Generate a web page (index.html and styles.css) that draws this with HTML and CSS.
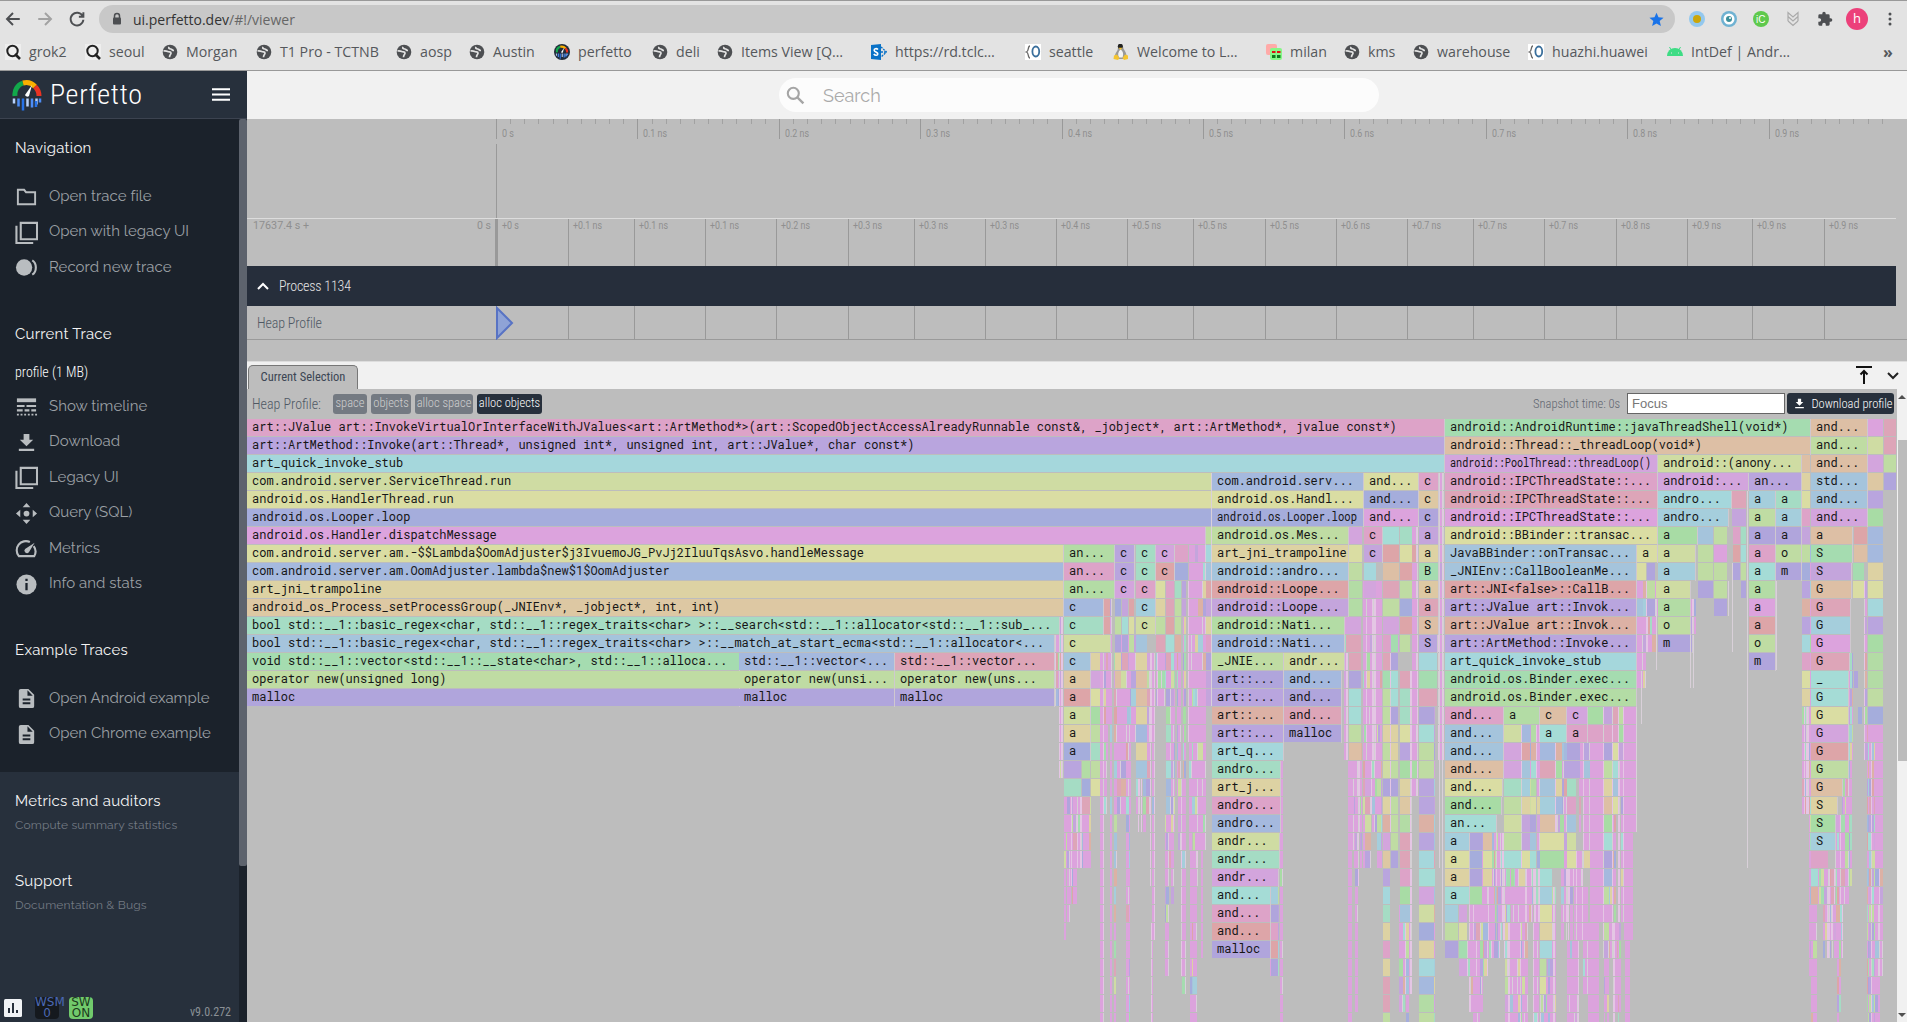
FILE: index.html
```html
<!DOCTYPE html>
<html lang="en">
<head>
<meta charset="utf-8">
<title>Perfetto UI</title>
<link rel="stylesheet" href="styles.css">
</head>
<body>
<svg class="defs" aria-hidden="true">
  <symbol id="globe" viewBox="0 0 16 16"><circle cx="8" cy="8" r="7.300" fill="#4d4f52"/><path d="M1.500 7c3-.5 4 .5 5 .8s2.500-.3 2.500 1.200-1.500 1.500-1.500 4.200M7 2.800c-.8 1.500.2 2 1.700 2.200s1.500 1.600 3.300 1.500" fill="none" stroke="#e3e3e3" stroke-width="1.700"/></symbol>
  <symbol id="grok" viewBox="0 0 16 16"><rect width="16" height="16" fill="#eee"/><circle cx="7.500" cy="7" r="5.200" fill="none" stroke="#222" stroke-width="2"/><path d="M10 10l5 5" stroke="#222" stroke-width="2.600"/></symbol>
  <symbol id="opengrok" viewBox="0 0 16 16"><rect width="16" height="16" fill="#fff"/><path d="M5 2C2.500 2 4.200 7 1.500 8c2.700 1 1 6 3.500 6" fill="none" stroke="#666" stroke-width="1.300"/><ellipse cx="10.800" cy="7.500" rx="3.400" ry="5" fill="none" stroke="#3a6f9c" stroke-width="1.800"/></symbol>
  <symbol id="logo" viewBox="0 0 30 32"><path d="M3 17a12 12 0 0 1 8-13" fill="none" stroke="#12a84b" stroke-width="5"/><path d="M11 4a12 12 0 0 1 12 3.500" fill="none" stroke="#fbb000" stroke-width="5"/><path d="M23 7.500A13 13 0 0 1 27 17" fill="none" stroke="#ea3323" stroke-width="5"/><path d="M20 6l-3 11a2.500 2.500 0 0 1-4-1z" fill="#fff"/><g stroke-width="2.500"><path d="M2 19.500v5M24.500 19.500v6" stroke="#b9d2fb"/><path d="M6.500 19.500v8M20 19.500v9M28 19.500v4" stroke="#4e8df5"/><path d="M11 19.500v12M24 22v6" stroke="#2672e8"/><path d="M15.500 19.500v8" stroke="#b9d2fb"/></g></symbol>
  <symbol id="layers" viewBox="0 0 24 24"><path d="M6 2h17v17H6zM1.500 5v18H19" fill="none" stroke="currentColor" stroke-width="2.200"/></symbol>
  <symbol id="file" viewBox="0 0 24 24"><path fill="currentColor" d="M14 2H6a2 2 0 0 0-2 2v16a2 2 0 0 0 2 2h12a2 2 0 0 0 2-2V8zm2 16H8v-2h8zm0-4H8v-2h8zm-3-5V3.500L18.500 9z"/></symbol>
  <symbol id="download" viewBox="0 0 24 24"><path fill="currentColor" d="M19 9h-4V3H9v6H5l7 7zM4 18.500v2.300h16v-2.300z"/></symbol>
</svg>

<header class="browser">
  <div class="toolbar">
    <svg class="nav-arrow" viewBox="0 0 24 24"><path d="M21 12H4M12 4l-8 8 8 8" /></svg>
    <svg class="nav-arrow off" viewBox="0 0 24 24"><path d="M3 12h17M12 4l8 8-8 8" /></svg>
    <svg class="nav-arrow" viewBox="0 0 24 24"><path d="M19.500 8A8.500 8.500 0 1 0 20.500 13M20.500 3v6h-6" /></svg>
    <div class="address">
      <svg class="lock" viewBox="0 0 10 14"><path d="M2.500 6V4a2.500 2.500 0 0 1 5 0v2" fill="none" stroke="#4d4f52" stroke-width="1.500"/><rect x="1" y="5.500" width="8" height="7" rx="1" fill="#4d4f52"/></svg>
      <span class="url">ui.perfetto.dev<i>/#!/viewer</i></span>
      <svg class="star" viewBox="0 0 24 24"><path fill="#1a73e8" d="M12 1l3.200 7.500 8.100.7-6.200 5.300 1.900 8L12 18.200 5 22.500l1.900-8L.7 9.200l8.100-.7z"/></svg>
    </div>
    <div class="extensions">
      <svg viewBox="0 0 16 16"><circle cx="8" cy="8" r="8" fill="#93c8ee"/><circle cx="8" cy="8" r="4" fill="#cba60a"/></svg>
      <svg viewBox="0 0 16 16"><circle cx="8" cy="8" r="8" fill="#6fb2d2"/><circle cx="8" cy="8" r="5.500" fill="#fff"/><circle cx="8" cy="8" r="3" fill="#3c8f9b"/><circle cx="9" cy="7" r="1" fill="#fff"/></svg>
      <svg viewBox="0 0 16 16"><circle cx="8" cy="8" r="8" fill="#5fc94d"/><text x="3" y="12" class="ext-ic">iC</text></svg>
      <svg viewBox="0 0 16 16"><path d="M3 10V1.500L8 6l5-4.500V10M3 5.500L8 10l5-4.500M3 10l5 4.500L13 10" fill="none" stroke="#aaa" stroke-width="1.200"/></svg>
      <svg viewBox="0 0 24 24"><path fill="#4d4f52" d="M20.500 11H19V7a2 2 0 0 0-2-2h-4V3.500a2.500 2.500 0 0 0-5 0V5H4a2 2 0 0 0-2 2v3.800h1.500a2.700 2.700 0 0 1 0 5.400H2V20a2 2 0 0 0 2 2h3.800v-1.500a2.700 2.700 0 0 1 5.400 0V22H17a2 2 0 0 0 2-2v-4h1.500a2.500 2.500 0 0 0 0-5z"/></svg>
    </div>
    <span class="avatar">h</span>
    <svg class="kebab" viewBox="0 0 4 16"><circle cx="2" cy="3" r="1.500"/><circle cx="2" cy="8" r="1.500"/><circle cx="2" cy="13" r="1.500"/></svg>
  </div>
  <nav class="bookmarks">
    <a><svg><use href="#grok"/></svg><span>grok2</span></a>
    <a><svg><use href="#grok"/></svg><span>seoul</span></a>
    <a><svg><use href="#globe"/></svg><span>Morgan</span></a>
    <a><svg><use href="#globe"/></svg><span>T1 Pro - TCTNB</span></a>
    <a><svg><use href="#globe"/></svg><span>aosp</span></a>
    <a><svg><use href="#globe"/></svg><span>Austin</span></a>
    <a><svg viewBox="0 0 16 16"><circle cx="8" cy="8" r="8" fill="#222c3a"/><use href="#logo" x="1.500" y="1" width="13" height="14"/></svg><span>perfetto</span></a>
    <a><svg><use href="#globe"/></svg><span>deli</span></a>
    <a><svg><use href="#globe"/></svg><span>Items View [Q…</span></a>
    <a><svg viewBox="0 0 16 16"><path d="M0 1l10-1v16L0 15z" fill="#0a72c7"/><path d="M7 5.500C5.500 4 3 4.500 3.200 6.300S7 8 6.800 10 4 11.500 2.800 10" fill="none" stroke="#fff" stroke-width="1.600"/><path d="M10 3l5.500 5L10 13M10 8h5" fill="none" stroke="#0a72c7" stroke-width="1.300" stroke-dasharray="2 1"/></svg><span>https://rd.tclc…</span></a>
    <a><svg><use href="#opengrok"/></svg><span>seattle</span></a>
    <a><svg viewBox="0 0 16 16"><path d="M7.500 0C10.500 0 9.800 3.500 11 5.500s2.800 4 2.500 8l-3 1.500h-5L2 13c-.5-3.500 2-5 2.700-7.500S4.500 0 7.500 0z" fill="#999"/><circle cx="7.300" cy="2.300" r="2.500" fill="#222"/><path d="M7.500 5.500c3 2 3 5 2 8H6c-1.500-3-1-6 1.500-8z" fill="#f3f3f3"/><path d="M5.500 3.800h4L7.500 6zM1 11.500l3-1 2.500 3.500L5 16l-4.500-1zM15 11.500l-3-1L9.500 14l1.500 2 4-1z" fill="#f4c430"/></svg><span>Welcome to L…</span></a>
    <a><svg viewBox="0 0 16 16"><rect width="11" height="11" rx="2" fill="#ffaaa8"/><rect x="4" y="4" width="12" height="12" rx="2" fill="#86f787"/><path d="M6 8h3.500M11 8h3.500" stroke="#d11" stroke-width="2"/><path d="M6 12.500h3.500M11 12.500h3.500" stroke="#0b7a1b" stroke-width="3"/></svg><span>milan</span></a>
    <a><svg><use href="#globe"/></svg><span>kms</span></a>
    <a><svg><use href="#globe"/></svg><span>warehouse</span></a>
    <a><svg><use href="#opengrok"/></svg><span>huazhi.huawei</span></a>
    <a><svg viewBox="0 0 16 16"><path d="M0 12a8 8 0 0 1 16 0z" fill="#3ddc84"/><path d="M2.500 3l2 3.500M13.500 3l-2 3.500" stroke="#3ddc84"/><path d="M4 9h1M11 9h1" stroke="#e3e3e3"/></svg><span>IntDef | Andr…</span></a>
    <b class="more">»</b>
  </nav>
</header>

<div class="app">
  <aside class="sidebar">
    <div class="brand">
      <svg class="brand-logo"><use href="#logo"/></svg>
      <span class="brand-name">Perfetto</span>
      <svg class="burger" viewBox="0 0 18 13"><path d="M0 1.200h18M0 6.500h18M0 11.800h18" stroke="#fff" stroke-width="2"/></svg>
    </div>
    <div class="side-body">
      <div class="side-scroll">
        <section class="group nav">
          <h2>Navigation</h2>
          <ul>
            <li><svg viewBox="0 0 24 24"><path d="M3 5h6.500l2 2.500H21V20H3z" fill="none" stroke="currentColor" stroke-width="2"/></svg><span>Open trace file</span></li>
            <li><svg><use href="#layers"/></svg><span>Open with legacy UI</span></li>
            <li><svg viewBox="0 0 24 24"><circle cx="9.500" cy="12" r="8.500" fill="currentColor"/><path d="M18 4.500c5 3 5 12 0 15" fill="none" stroke="currentColor" stroke-width="2.200"/></svg><span>Record new trace</span></li>
          </ul>
        </section>
        <section class="group trace">
          <h2>Current Trace</h2>
          <p class="profile">profile (1 MB)</p>
          <ul>
            <li><svg viewBox="0 0 24 24"><path d="M2 5.500h20" stroke="currentColor" stroke-width="4"/><path d="M2 11.500h8M12 11.500h10M2 16h6M10 16h5M17 16h5" stroke="currentColor" stroke-width="2.300"/><path d="M2 20.500h21" stroke="currentColor" stroke-width="2" stroke-dasharray="2 1.800"/></svg><span>Show timeline</span></li>
            <li><svg><use href="#download"/></svg><span>Download</span></li>
            <li><svg><use href="#layers"/></svg><span>Legacy UI</span></li>
            <li><svg viewBox="0 0 24 24"><circle cx="12" cy="12" r="3" fill="currentColor"/><path d="M12 1l4 4.500H8zM12 23l4-4.500H8zM1 12l4.500-4v8zM23 12l-4.500-4v8z" fill="currentColor"/></svg><span>Query (SQL)</span></li>
            <li><svg viewBox="0 0 24 24"><path d="M19.500 9.500A9.500 9.500 0 0 1 20 20H4A9.600 9.600 0 0 1 15.500 5.200" fill="none" stroke="currentColor" stroke-width="2.200"/><path fill="currentColor" d="M20.500 6l-6 10a2.600 2.600 0 0 1-4-3.500z"/></svg><span>Metrics</span></li>
            <li><svg viewBox="0 0 24 24"><circle cx="12" cy="12" r="10.500" fill="currentColor"/><path d="M12 6v2.400M12 10.500V18" stroke="#1b222b" stroke-width="2.400"/></svg><span>Info and stats</span></li>
          </ul>
        </section>
        <section class="group examples">
          <h2>Example Traces</h2>
          <ul>
            <li><svg><use href="#file"/></svg><span>Open Android example</span></li>
            <li><svg><use href="#file"/></svg><span>Open Chrome example</span></li>
          </ul>
        </section>
        <section class="extra">
          <h2>Metrics and auditors</h2>
          <p>Compute summary statistics</p>
          <h2 class="support">Support</h2>
          <p>Documentation &amp; Bugs</p>
          <footer>
            <svg class="stats" viewBox="0 0 18 18"><rect width="18" height="18" rx="1.500" fill="#f1f3f6"/><path d="M5 9v5M9 4v10M13 11v3" stroke="#27303c" stroke-width="2"/></svg>
            <span class="badge wsm">WSM<br>0</span>
            <span class="badge sw">SW<br>ON</span>
            <span class="version">v9.0.272</span>
          </footer>
        </section>
      </div>
      <div class="side-bar"><div class="side-thumb"></div></div>
    </div>
  </aside>

  <main class="content">
    <div class="topbar">
      <div class="omnibox">
        <svg viewBox="0 0 24 24"><circle cx="9.500" cy="9.500" r="6.300" fill="none" stroke="#a5a5a5" stroke-width="2.400"/><path d="M14 14l7 7" stroke="#a5a5a5" stroke-width="2.800"/></svg>
        <span>Search</span>
      </div>
    </div>
    <svg class="overview" id="overview" width="1660" height="147"></svg>
    <div class="process"><svg viewBox="0 0 12 8"><path d="M1 7l5-5 5 5" fill="none" stroke="#fff" stroke-width="2"/></svg><span>Process 1134</span></div>
    <div class="track"><span>Heap Profile</span><svg id="track" width="1411" height="34"></svg></div>
    <div class="spacer"></div>
    <div class="tabs">
      <span class="tab">Current Selection</span>
      <svg class="to-top" viewBox="0 0 18 20"><path d="M1 2h16M9 6v13M5.500 9.500L9 6l3.500 3.500" fill="none" stroke="#111" stroke-width="2"/></svg>
      <svg class="chev" viewBox="0 0 12 8"><path d="M1 1l5 5 5-5" fill="none" stroke="#222" stroke-width="2"/></svg>
    </div>
    <div class="details">
      <div class="panel">
        <div class="controls">
          <span class="title">Heap Profile:</span>
          <button class="b1">space</button><button class="b2">objects</button><button class="b3">alloc space</button><button class="b4 on">alloc objects</button>
          <span class="snapshot">Snapshot time: 0s</span>
          <span class="focus">Focus</span>
          <button class="save"><svg><use href="#download"/></svg><span>Download profile</span></button>
        </div>
        <svg class="flame" id="flame" width="1650" height="603"></svg>
      </div>
      <div class="scroll"><i class="up"></i><i class="thumb"></i><i class="down"></i></div>
    </div>
  </main>
</div>
<script src="flame.js"></script>
</body>
</html>
```
FILE: styles.css
```css
* { box-sizing: border-box; }
body { margin: 0; width: 1907px; height: 1022px; overflow: hidden; background: #bdbdbd; font-family: Roboto, "Liberation Sans", sans-serif; }
svg { display: block; flex: none; }
.defs { position: absolute; width: 0; height: 0; }
h2, p, ul { margin: 0; padding: 0; }
ul { list-style: none; }

.browser { height: 71px; background: #e3e3e3; border-top: 1px solid #999; border-bottom: 1px solid #999; font-family: "Open Sans", "Noto Sans", sans-serif; color: #55585c; }
.toolbar { display: flex; align-items: center; height: 36px; padding-left: 4px; }
.nav-arrow { width: 18px; height: 18px; margin-right: 14px; fill: none; stroke: #4d4f52; stroke-width: 2.600; }
.nav-arrow.off { stroke: #a2a2a2; }
.address { display: flex; align-items: center; width: 1576px; height: 28px; margin-left: -1px; padding: 0 11px 0 13px; border-radius: 14px; background: #c8c8c8; }
.lock { width: 10px; height: 14px; margin-right: 11px; }
.url { flex: 1; font-size: 14px; color: #333; }
.url i { font-style: normal; color: #666; }
.star { width: 15px; height: 15px; }
.extensions { display: flex; gap: 16px; margin-left: 14px; }
.extensions svg { width: 16px; height: 16px; }
.ext-ic { font: 10px "Liberation Sans", sans-serif; fill: #fff; }
.avatar { width: 22px; height: 22px; margin: 0 20px 0 13px; border-radius: 50%; background: #ec407a; color: #fff; font-size: 13px; line-height: 21px; text-align: center; }
.kebab { width: 4px; height: 16px; fill: #4d4f52; }
.bookmarks { display: grid; grid-template-columns: 80px 77px 94px 140px 73px 85px 98px 65px 154px 154px 88px 153px 78px 69px 115px 139px 1fr 24px; height: 29px; padding-left: 5px; align-items: center; }
.bookmarks a { display: flex; align-items: center; gap: 8px; white-space: nowrap; font-size: 14.2px; }
.bookmarks a svg { width: 16px; height: 16px; }
.more { font-size: 16px; line-height: 20px; }

.app { display: flex; height: 951px; }
.sidebar { display: flex; flex-direction: column; width: 247px; background: #1b222b; font-family: Raleway, Lato, sans-serif; }
.brand { display: flex; align-items: center; height: 48px; padding: 0 17px 0 12px; background: #27303c; border-bottom: 1px solid #3c4350; }
.brand-logo { width: 30px; height: 32px; margin-right: 8px; }
.brand-name { flex: 1; color: #fff; font-family: Roboto, sans-serif; font-weight: 300; font-size: 28px; font-stretch: 80%; letter-spacing: 0.7px; }
.burger { width: 18px; height: 13px; }
.side-body { display: flex; flex: 1; }
.side-scroll { display: flex; flex-direction: column; width: 239px; }
.side-bar { width: 8px; }
.side-thumb { height: 747px; border-radius: 2px; background: #5d636d; }
.group { padding: 15px 0 0 15px; }
.group h2, .extra h2 { color: #f4f4f4; font-weight: 400; font-size: 15px; line-height: 30px; letter-spacing: 0.25px; }
.group.nav { height: 185px; padding-top: 14px; }
.trace { height: 316px; }
.examples { height: 152px; }
.nav ul { padding-top: 16px; }
.examples ul { padding-top: 16px; }
.group li { display: flex; align-items: center; height: 35.5px; gap: 11px; color: #b9bdc0; }
.group li svg { width: 23px; height: 23px; }
.group li span { margin-top: -2px; color: #9ca0a5; font-size: 15px; letter-spacing: 0.03px; white-space: nowrap; }
.profile { margin: 8px 0 2px; color: #fff; font-family: Roboto, sans-serif; font-stretch: 75%; font-weight: 300; font-size: 14px; line-height: 30px; }
.extra { flex: 1; display: flex; flex-direction: column; padding: 14px 0 0 15px; background: #27303c; }
.extra p { color: #747b84; font-size: 12px; line-height: 18px; letter-spacing: 0.18px; }
.extra .support { margin-top: 32px; }
.extra footer { display: flex; align-items: center; margin: auto 8px 3px -11px; }
.stats { width: 18px; height: 18px; }
.badge { width: 24px; height: 22px; border-radius: 4px; font: 12px/11px "DejaVu Sans", sans-serif; text-align: center; }
.wsm { margin: 0 10px 0 13px; background: #15191e; color: #4a68b4; }
.sw { background: #71ca6c; color: #1c3a1c; }
.version { margin-left: auto; padding-top: 7px; color: #8b9096; font: 12px Roboto, sans-serif; font-stretch: 75%; }

.content { display: flex; flex-direction: column; flex: 1; width: 1660px; }
.topbar { height: 48px; padding-top: 7px; background: #f1f1f1; }
.omnibox { display: flex; align-items: center; width: 600px; height: 34px; margin-left: 532px; padding-left: 6px; gap: 17px; border-radius: 17px; background: #fcfcfc; color: #aaa; font: 18px Raleway, Lato, sans-serif; }
.omnibox svg { width: 21px; height: 21px; }
.process { display: flex; align-items: center; width: 1649px; height: 40px; padding-left: 10px; gap: 10px; background: #262e3b; color: #e6e6e6; font-size: 14px; font-stretch: 75%; font-weight: 300; letter-spacing: -0.2px; }
.process svg { width: 12px; height: 8px; }
.track { display: flex; align-items: center; height: 34px; padding-left: 10px; border-bottom: 1px solid #9a9a9a; color: #4f5864; font-size: 14px; font-stretch: 75%; font-weight: 300; letter-spacing: -0.15px; }
.track span { width: 239px; }
.spacer { height: 21px; }
.tabs { display: flex; height: 28px; padding: 3px 8px 0 1px; border-top: 1px solid #ddd; background: #f1f1f1; }
.tab { width: 110px; height: 24px; border: 1px solid #777; border-bottom: 0; border-radius: 5px 5px 0 0; background: #bdbdbd; color: #3c4654; font-size: 12.5px; font-stretch: 75%; line-height: 22px; text-align: center; }
.to-top { width: 18px; height: 20px; margin: 0 14px 0 auto; }
.chev { width: 12px; height: 8px; margin-top: 7px; }
.details { display: flex; flex: 1; }
.panel { width: 1650px; }
.controls { display: flex; align-items: center; height: 30px; padding: 0 3px 1px 5px; font-stretch: 75%; }
.controls button { height: 20px; padding: 0 0 2px; border: 0; border-radius: 3px; background: #747a82; color: #d0d0d0; font: 300 12.500px Roboto, sans-serif; font-stretch: 75%; white-space: nowrap; }
.title { width: 81px; color: #4f5864; font-size: 14px; font-weight: 300; }
.b1 { width: 34px; margin-right: 4px; } .b2 { width: 40px; margin-right: 4px; } .b3 { width: 58px; margin-right: 4px; } .b4 { width: 65px; }
.controls .on, .controls .save { background: #27303c; color: #fff; }
.snapshot { margin-left: auto; width: 94px; color: #5f6670; font-size: 12.500px; font-weight: 300; white-space: nowrap; }
.focus { width: 158px; height: 21px; padding-left: 4px; border: 1px solid #666; background: #fff; color: #777; font: 13px/19px "Liberation Sans", sans-serif; }
.controls .save { display: flex; align-items: center; justify-content: center; gap: 5px; width: 107px; height: 21px; margin-left: 2px; padding: 0 0 1px 5px; }
.save svg { width: 13px; height: 13px; }
.scroll { display: flex; flex-direction: column; align-items: center; width: 10px; background: #f1f1f1; }
.up { margin-top: 6px; border: 4px solid transparent; border-top: 0; border-bottom: 4px solid #505050; }
.thumb { width: 9px; height: 321px; margin-top: 41px; margin-left: 1px; background: #bcbcbc; }
.down { margin: auto 0 5px; border: 4px solid transparent; border-bottom: 0; border-top: 4px solid #505050; }
.flame text { font-family: "Roboto Mono", "DejaVu Sans Mono", monospace; font-size: 12px; fill: #161616; white-space: pre; }
.overview text { font-family: Roboto, sans-serif; font-size: 10px; fill: #8f8f8f; }
```
FILE: flame.js
```js
const NS = 'http://www.w3.org/2000/svg';
function add(svg, tag, attrs, text) {
  const e = document.createElementNS(NS, tag);
  for (const k in attrs) e.setAttribute(k, attrs[k]);
  if (text) e.textContent = text;
  svg.appendChild(e);
}
function rect(svg, x, y, w, h, fill) { add(svg, 'rect', { x, y, width: w, height: h, fill }); }
function label(svg, x, y, w, text) {
  add(svg, 'text', { x, y, textLength: w, lengthAdjust: 'spacingAndGlyphs' }, text);
}

/* Time axes */
const ov = document.getElementById('overview');
for (let i = 0; i < 100; i++) {
  const x = Math.round(249 + i * 14.14);
  if (i % 10 === 0) {
    rect(ov, x, 0, 1, 20, '#999');
    label(ov, x + 6, 18, i ? 24 : 12, i ? '0.' + i / 10 + ' ns' : '0 s');
  } else if (x < 1649) rect(ov, x, 0, 1, 5, '#a2a2a2');
}
rect(ov, 249, 25, 1, 74, '#999');
rect(ov, 0, 99, 1649, 1, '#dcdcdc');
label(ov, 6, 110, 56, '17637.4 s +');
label(ov, 230, 110, 14, '0 s');
rect(ov, 248, 100, 3, 47, '#999');
label(ov, 255, 110, 17, '+0 s');
const ticks = [321, 387, 458, 529, 601, 667, 738, 809, 880, 946, 1018, 1089, 1160, 1226, 1297, 1369, 1440, 1505, 1577];
const values = ['0.1', '0.1', '0.1', '0.2', '0.3', '0.3', '0.3', '0.4', '0.5', '0.5', '0.5', '0.6', '0.7', '0.7', '0.7', '0.8', '0.9', '0.9', '0.9'];
const track = document.getElementById('track');
ticks.forEach((x, i) => {
  rect(ov, x, 100, 1, 47, '#999');
  label(ov, x + 5, 110, 29, '+' + values[i] + ' ns');
  rect(track, x - 249, 0, 1, 34, '#999');
});
rect(track, 0, 0, 1, 34, '#888');
add(track, 'path', { d: 'M1 2L16 17L1 32z', fill: '#8fa3d6', stroke: '#5873c4', 'stroke-width': 2 });

/* Heap flame graph: [x, right edge, colour, label] for each depth */
const C = { p: '#dda3c8', v: '#b9a5de', c: '#a5d7dc', l: '#cfdca3', y: '#dadda3', b: '#a5addc', m: '#dca3dd', s: '#a5b9de', t: '#ddd2a3', o: '#ddc8a3', g: '#a5dcc4', h: '#a5c4dc', G: '#a5dcb0', L: '#bfdca3', V: '#b0a5dc', r: '#dda5b8', R: '#dda5a8', O: '#ddbfa5', k: '#d3a5dd', n: '#b3dca5', q: '#dcb1a5', a: '#a5cedc', T: '#a5dcd6', P: '#c4a5dc', e: '#a8dca5', w: '#e4c6e4', W: '#d4d0d4' };
const H = 17, ROW = 18, X0 = 247;
const fl = document.getElementById('flame');

/* Columns of very narrow frames: [left, right, first depth, last depth, share of pink, taper] */
const bands = [
  [1059, 1063, 11, 19, .6, 0], [1053, 1060, 12, 15, .3, 0], [1064, 1080, 21, 27, .6, 1], [1080, 1091, 21, 24, .45, 1], [1091, 1100, 19, 20, .4, 0], [1064, 1066, 26, 28, 1, 0],
  [1100, 1104, 13, 33, .97, 0], [1104, 1108, 12, 22, .8, 1], [1103, 1112, 10, 18, .6, 1], [1110, 1112, 16, 33, .9, 0], [1114, 1116, 18, 33, .4, 0], [1114, 1121, 13, 27, .35, 1],
  [1121, 1136, 12, 21, .55, 1], [1126, 1130, 18, 33, .75, 0], [1136, 1150, 13, 22, .3, 1], [1150, 1155, 13, 28, .9, 0], [1151, 1153, 28, 33, .9, 0],
  [1156, 1165, 12, 15, .3, 0], [1165, 1175, 13, 27, .4, 1], [1165, 1169, 22, 30, .5, 0], [1175, 1189, 9, 23, .55, 1], [1181, 1186, 20, 31, .75, 0],
  [1189, 1206, 7, 23, .85, 0], [1190, 1198, 24, 33, .92, 0], [1201, 1203, 24, 29, .8, 0], [1206, 1212, 12, 13, .4, 0],
  [1270, 1279, 26, 30, .35, 0], [1280, 1283, 19, 33, .9, 0], [1344, 1348, 8, 18, .7, 0],
  [1349, 1362, 18, 24, .6, 1], [1348, 1352, 19, 33, .95, 0], [1354, 1359, 18, 33, .7, 1],
  [1363, 1382, 9, 18, .9, 0], [1363, 1382, 19, 24, .5, 1], [1389, 1392, 10, 22, .7, 0], [1412, 1418, 6, 20, .88, 0], [1409, 1412, 14, 31, .7, 0],
  [1399, 1409, 27, 33, .6, 1], [1438, 1444, 3, 18, .8, 0], [1433, 1435, 13, 33, 0, 0], [1391, 1398, 16, 24, .1, 0],
  [1469, 1504, 23, 28, .45, 0], [1467, 1488, 29, 30, .3, 0], [1469, 1483, 31, 32, .5, 0], [1473, 1480, 31, 33, .95, 0], [1488, 1500, 29, 29, .4, 0],
  [1521, 1540, 17, 24, .4, 0], [1504, 1540, 25, 27, .5, 0], [1504, 1528, 28, 33, .6, 0], [1533, 1539, 28, 33, .95, 0],
  [1554, 1567, 18, 24, .4, 0], [1547, 1556, 26, 33, .6, 0], [1540, 1547, 31, 33, .5, 0], [1561, 1567, 25, 28, .6, 1],
  [1579, 1590, 18, 24, .7, 0], [1567, 1583, 24, 28, .7, 0], [1567, 1579, 29, 33, .95, 0], [1583, 1588, 26, 31, .7, 1],
  [1603, 1613, 16, 29, .4, 0], [1604, 1609, 30, 33, .6, 0], [1613, 1624, 16, 27, .65, 0], [1613, 1621, 28, 33, .7, 1],
  [1637, 1647, 9, 14, .6, 1], [1647, 1658, 9, 12, .3, 1], [1690, 1696, 10, 12, .8, 1],
  [1802, 1809, 16, 21, .5, 0], [1809, 1811, 7, 30, .8, 0], [1848, 1853, 13, 25, .5, 0], [1842, 1849, 20, 23, .4, 0], [1835, 1849, 22, 26, .6, 0],
  [1811, 1835, 25, 26, .5, 0], [1811, 1817, 27, 33, .75, 0], [1823, 1843, 27, 29, .6, 1], [1837, 1841, 28, 33, .6, 1],
  [1864, 1867, 9, 18, .3, 0], [1867, 1875, 17, 33, .35, 0], [1875, 1883, 18, 30, .9, 0], [1875, 1880, 31, 33, .9, 0]
];
let seed = 20481;
const rnd = () => { seed = (seed * 16807) % 2147483647; return seed / 2147483647; };
const mix = 'vlbmtghGLrRkqaTPeVs';
for (const [x0, x1, r0, r1, pink, taper] of bands) {
  let x = x0;
  while (x < x1) {
    const w = Math.min(x1 - x, 1 + Math.floor(rnd() * rnd() * 6));
    let end = taper ? r1 - Math.floor(rnd() * (r1 - r0) * .6 * (0.4 + (x - x0) / (x1 - x0))) : r1;
    if (x1 - x0 > 4 && r1 > 21 && w < 3 && rnd() < .25) end -= Math.floor(rnd() * (r1 - r0));
    const light = w === 1 && rnd() < .6;
    for (let r = r0; r <= end; r++) {
      const f = light ? (rnd() < .8 ? C.w : C.W) : rnd() < pink ? C.m : C[mix[Math.floor(rnd() * mix.length)]];
      rect(fl, x - X0, r * ROW, w, H, f);
      if (w > 2 && rnd() < .3) rect(fl, x - X0 + w - 1, r * ROW, 1, H, '#d9cedb');
    }
    x += w;
  }
}

/* Runs of unlabelled frames: [left, right, first depth, colours downwards] */
const runs = [
  [1884, 1896, 0, 'rrLV'], [1868, 1883, 0, 'mlkovesstycvennLbm'], [1802, 1810, 2, 'OtypPLbvqvcpyt'],
  [1854, 1867, 6, 'RO'], [1853, 1864, 8, 'Gy'], [1854, 1858, 14, 'V'], [1858, 1862, 16, 'b'],
  [1732, 1746, 4, 'rP'], [1698, 1713, 6, 'hLLV'], [1714, 1727, 6, 'LmLLV'], [1733, 1740, 6, 'pRV'], [1741, 1746, 6, 'gTLV'],
  [1637, 1646, 8, 'y'], [1647, 1655, 8, 'VLV'], [1349, 1362, 6, 'kyLnn'], [1346, 1361, 11, 'kr'], [1349, 1361, 13, 'rVTTLO'],
  [1364, 1376, 8, 'ck'], [1383, 1399, 6, 'TROrLkk'], [1400, 1412, 6, 'gyRLbR'], [1400, 1410, 12, 'L'], [1383, 1390, 12, 'prGLLtLlVtqkovcgtptrrL'],
  [1391, 1398, 12, 'GVTTVttLVLLLV'], [1400, 1410, 14, 'rggyvetonrrpeh'], [1419, 1437, 13, 'cGr'], [1419, 1434, 16, 'VTLLvvqvcTklbtcsnL'],
  [1175, 1188, 7, 'pb'], [1175, 1181, 9, 'gLLq'], [1182, 1186, 9, 'vP'], [1156, 1165, 9, 'ytLr'], [1166, 1174, 9, 'prRT'],
  [1104, 1110, 10, 'RR'], [1115, 1121, 10, 'bLVtO'], [1122, 1128, 10, 'PTVr'], [1129, 1134, 10, 'RyLm'], [1136, 1147, 12, 'htOOtsth'],
  [1091, 1100, 13, 'tkyeLgLy'], [1206, 1211, 6, 'LchRPtpVPP'], [1271, 1278, 26, 'aVpRV'],
  [1504, 1521, 17, 'lkkgLlLT'], [1522, 1530, 17, 'sRhatPPy'], [1531, 1536, 17, 'nqTny'], [1540, 1555, 18, 'srhaO'], [1540, 1564, 23, 'ye'], [1540, 1552, 25, 'Taytc'],
  [1540, 1546, 30, 'Ly'], [1556, 1562, 18, 'qets'], [1567, 1580, 18, 'Vv'], [1567, 1576, 20, 'gphly'], [1588, 1603, 16, 'ep'], [1604, 1612, 16, 'PpVLtOeTVs'], [1590, 1603, 18, 'mmmmmmmmmm'],
  [1588, 1599, 28, 'mmmmmm'], [1613, 1618, 16, 'rpyThy'], [1619, 1623, 16, 'LeP'], [1624, 1636, 16, 'mmmmmmm'], [1624, 1633, 23, 'mmmmmm'], [1625, 1630, 29, 'mmmmm'],
  [1470, 1482, 23, 'VbVe'], [1483, 1492, 23, 'Oyt'], [1445, 1458, 27, 'aLV'], [1459, 1467, 27, 'kyGk'], [1064, 1081, 19, 'vg'], [1082, 1090, 19, 'nbr'], [1811, 1828, 24, 'p'], [1811, 1818, 25, 'Tq'], [1876, 1883, 17, 'mmmmmmmm']
];
const frames = [
  [0, 247, 1444, 'p', 'art::JValue art::InvokeVirtualOrInterfaceWithJValues<art::ArtMethod*>(art::ScopedObjectAccessAlreadyRunnable const&, _jobject*, art::ArtMethod*, jvalue const*)'],
  [1, 247, 1444, 'v', 'art::ArtMethod::Invoke(art::Thread*, unsigned int*, unsigned int, art::JValue*, char const*)'],
  [2, 247, 1444, 'c', 'art_quick_invoke_stub'],
  [3, 247, 1211, 'l', 'com.android.server.ServiceThread.run'],
  [4, 247, 1211, 'y', 'android.os.HandlerThread.run'],
  [5, 247, 1211, 'b', 'android.os.Looper.loop'],
  [6, 247, 1205, 'm', 'android.os.Handler.dispatchMessage'],
  [7, 247, 1063, 'y', 'com.android.server.am.-$$Lambda$OomAdjuster$j3IvuemoJG_PvJj2IluuTqsAsvo.handleMessage'],
  [8, 247, 1063, 's', 'com.android.server.am.OomAdjuster.lambda$new$1$OomAdjuster'],
  [9, 247, 1063, 't', 'art_jni_trampoline'],
  [10, 247, 1063, 'o', 'android_os_Process_setProcessGroup(_JNIEnv*, _jobject*, int, int)'],
  [11, 247, 1059, 'g', 'bool std::__1::basic_regex<char, std::__1::regex_traits<char> >::__search<std::__1::allocator<std::__1::sub_...'],
  [12, 247, 1054, 'h', 'bool std::__1::basic_regex<char, std::__1::regex_traits<char> >::__match_at_start_ecma<std::__1::allocator<...'],
  [13, 247, 739, 'G', 'void std::__1::vector<std::__1::__state<char>, std::__1::alloca...'],
  [14, 247, 739, 'L', 'operator new(unsigned long)'], [15, 247, 739, 'V', 'malloc'],
  [13, 739, 894, 's', 'std::__1::vector<...'], [14, 739, 894, 'L', 'operator new(unsi...'], [15, 739, 894, 'V', 'malloc'],
  [13, 895, 1054, 'r', 'std::__1::vector...'], [14, 895, 1054, 'L', 'operator new(uns...'], [15, 895, 1054, 'V', 'malloc']
];
/* Stacks: left, first depth, then right|colour|label going down */
function stack(x, r, text) {
  text.split('\n').forEach((s, i) => { const [e, c, l] = s.split('|'); frames.push([r + i, x, +e, c, l]); });
}
stack(1212, 3, '1363|s|com.android.serv...\n1363|y|android.os.Handl...\n1363|b|android.os.Looper.loop\n1348|L|android.os.Mes...\n1348|t|art_jni_trampoline\n1348|h|android::andro...\n1348|R|android::Loope...\n1348|P|android::Loope...\n1344|n|android::Nati...\n1344|s|android::Nati...\n1283|L|_JNIE...\n1283|V|art::...\n1283|v|art::...\n1283|q|art::...\n1283|v|art::...\n1283|c|art_q...\n1280|g|andro...\n1280|t|art_j...\n1280|p|andro...\n1280|s|andro...\n1279|l|andr...\n1279|g|andr...\n1278|k|andr...\n1270|T|and...\n1270|p|and...\n1270|R|and...\n1270|V|malloc');
stack(1284, 13, '1344|l|andr...\n1341|s|and...\n1341|V|and...\n1341|r|and...\n1341|V|malloc');
stack(1364, 3, '1418|y|and...\n1418|b|and...\n1418|m|and...\n1382|p|c\n1382|P|c');
stack(1419, 3, '1438|p|c\n1438|o|c\n1438|V|c\n1438|P|a\n1438|t|a\n1438|G|B\n1438|o|a\n1438|r|a\n1438|O|S\n1437|v|S');
stack(1064, 7, '1114|n|an...\n1114|p|an...\n1114|n|an...\n1103|s|c\n1103|g|c\n1110|l|c\n1090|h|c\n1090|o|a\n1090|R|a\n1090|l|a\n1090|t|a\n1090|b|a');
stack(1115, 7, '1134|v|c\n1134|v|c\n1134|k|c');
stack(1136, 7, '1155|g|c\n1155|g|c\n1155|p|c\n1155|a|c\n1155|l|c');
stack(1156, 7, '1174|k|c\n1174|R|c');
stack(1445, 0, '1810|G|android::AndroidRuntime::javaThreadShell(void*)\n1810|O|android::Thread::_threadLoop(void*)\n1657|k|android::PoolThread::threadLoop()\n1657|p|android::IPCThreadState::...\n1657|r|android::IPCThreadState::...\n1657|m|android::IPCThreadState::...\n1657|y|android::BBinder::transac...\n1636|h|JavaBBinder::onTransac...\n1636|h|_JNIEnv::CallBooleanMe...\n1636|R|art::JNI<false>::CallB...\n1636|v|art::JValue art::Invok...\n1636|q|art::JValue art::Invok...\n1636|v|art::ArtMethod::Invoke...\n1636|c|art_quick_invoke_stub\n1636|G|android.os.Binder.exec...\n1636|n|android.os.Binder.exec...\n1503|p|and...\n1503|h|and...\n1503|h|and...\n1503|O|and...\n1502|y|and...\n1501|e|and...\n1496|T|an...\n1469|a|a\n1469|y|a\n1469|t|a\n1469|T|a');
stack(1504, 16, '1539|n|a'); stack(1540, 16, '1566|O|c\n1566|T|a'); stack(1567, 16, '1587|k|c\n1587|p|a');
stack(1637, 7, '1657|y|a');
stack(1658, 2, '1801|l|android::(anony...\n1748|k|android:...\n1731|c|andro...\n1728|a|andro...\n1697|e|a\n1695|l|a\n1695|a|a\n1690|l|a\n1690|n|a\n1690|L|o\n1692|V|m');
stack(1749, 3, '1801|v|an...\n1775|a|a\n1775|L|a\n1775|V|a\n1775|p|a\n1775|T|a\n1775|n|a\n1775|m|a\n1775|R|a\n1775|L|o\n1775|V|m');
stack(1776, 4, '1801|g|a\n1801|a|a\n1801|V|a\n1801|L|o\n1801|V|m');
stack(1811, 0, '1867|O|and...\n1867|L|and...\n1867|O|and...\n1867|h|std...\n1867|h|and...\n1867|k|and...\n1852|O|a\n1852|G|S\n1851|P|S\n1851|O|G\n1850|r|G\n1850|a|G\n1850|m|G\n1849|r|G\n1848|T|_\n1848|T|G\n1848|y|G\n1848|k|G\n1848|R|G\n1848|L|G\n1842|O|G\n1837|t|S\n1835|e|S\n1835|a|S');

for (const [x, e, r, cols] of runs) [...cols].forEach((c, i) => {
  rect(fl, x - X0, (r + i) * ROW, e - x, H, C[c]);
});
for (const [r, x, e, c, text] of frames) {
  rect(fl, x - X0, r * ROW, e - x, H, C[c]);
  rect(fl, e - X0, r * ROW, 1, ROW, '#cfc8cf');
  const natural = text.length * 7.2, room = e - x - 11;
  label(fl, x - X0 + 5, r * ROW + 12, text.length > 20 && natural > room ? room : natural, text);
}
/* Hairline frames reaching below their neighbours */
for (const [x, r0, r1] of [[1656, 10, 13], [1690, 12, 14], [1693, 12, 14], [1728, 9, 10], [1732, 8, 12], [1747, 4, 24], [1776, 9, 13], [1641, 14, 16], [1636, 16, 22], [1442, 3, 28], [1439, 3, 24], [1211, 3, 15]])
  rect(fl, x - X0, r0 * ROW, 1, (r1 - r0 + 1) * ROW - 1, '#d9d0d9');
```
